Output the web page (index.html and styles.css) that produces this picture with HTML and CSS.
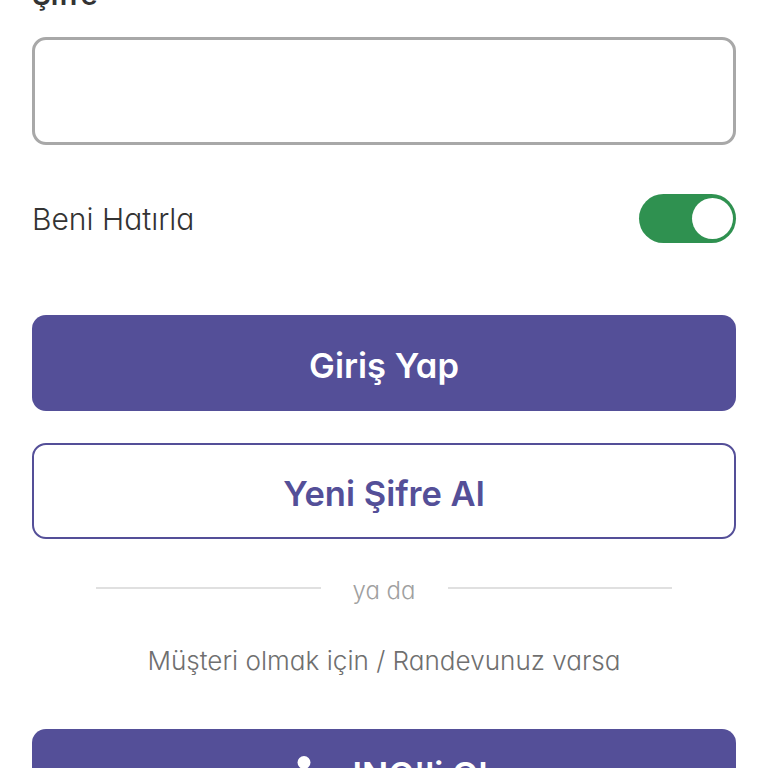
FILE: index.html
```html
<!DOCTYPE html>
<html lang="tr">
<head>
<meta charset="utf-8">
<title>Giriş</title>
<link rel="stylesheet" href="styles.css">
</head>
<body>
<main class="page">
  <label class="field-label" for="pw">Şifre</label>
  <input class="field" id="pw" type="password">
  <div class="remember">
    <span class="remember-text">Beni Hatırla</span>
    <span class="toggle"><span class="knob"></span></span>
  </div>
  <button class="btn btn-primary btn-login">Giriş Yap</button>
  <button class="btn btn-outline">Yeni Şifre Al</button>
  <div class="divider"><span class="line"></span><span class="or">ya da</span><span class="line"></span></div>
  <p class="note">Müşteri olmak için / Randevunuz varsa</p>
  <button class="btn btn-primary btn-join">
    <svg class="user-icon" width="24" height="40" viewBox="0 0 24 40"><circle cx="12" cy="6.5" r="6.5" fill="#fff"/><path d="M2 28c0-7 4-11 10-11s10 4 10 11v6H2z" fill="#fff"/></svg>
    <span>ING'li Ol</span>
  </button>
</main>
</body>
</html>
```
FILE: styles.css
```css
* { box-sizing: border-box; }
html, body { margin: 0; height: 768px; overflow: hidden; background: #fff; }
body { font-family: Inter, Lato, sans-serif; font-feature-settings: "cv11" 1; color: #333; }
.page { display: flex; flex-direction: column; height: 768px; overflow: hidden; padding: 0 32px; }
.field-label { flex: none; height: 38px; font-size: 29px; line-height: 37px; font-weight: 600; color: #333; margin-top: -24px; }
.field { display: block; flex: none; width: 100%; height: 108px; margin: 23px 0 0; border: 3px solid #a8a8a8; border-radius: 14px; background: #fff; outline: 0; }
.remember { display: flex; flex: none; align-items: center; justify-content: space-between; margin-top: 49px; height: 49px; }
.remember-text { font-size: 30px; font-weight: 300; color: #333; }
.toggle { display: flex; justify-content: flex-end; align-items: center; width: 97px; height: 49px; padding-right: 3px; border-radius: 25px; background: #2f9150; }
.knob { width: 41px; height: 41px; border-radius: 50%; background: #fff; }
.btn { display: flex; align-items: center; justify-content: center; width: 100%; height: 96px; border-radius: 14px; font-family: inherit; font-feature-settings: inherit; font-size: 34.5px; font-weight: 600; padding: 4px 0 0; flex: none; }
.btn-primary { background: #544f98; color: #fff; border: 0; }
.btn-login { margin-top: 72px; }
.btn-outline { margin-top: 32px; background: #fff; color: #544f98; border: 2px solid #544f98; }
.divider { display: flex; flex: none; align-items: center; justify-content: center; gap: 32px; margin-top: 34px; height: 34px; padding: 0 64px; }
.line { flex: 1; height: 2px; background: #e0e0e0; margin-top: -4px; }
.or { font-size: 24px; font-weight: 300; color: #a0a0a0; line-height: 34px; padding-top: 2px; }
.note { flex: none; margin: 36px 0 0; font-size: 26.1px; line-height: 36px; font-weight: 300; text-align: center; color: #6f6f6f; }
.btn-join { margin-top: 50px; gap: 36px; align-items: flex-start; padding: 25px 0 0 12px; }
.user-icon { flex: none; margin-top: 2px; }
```
